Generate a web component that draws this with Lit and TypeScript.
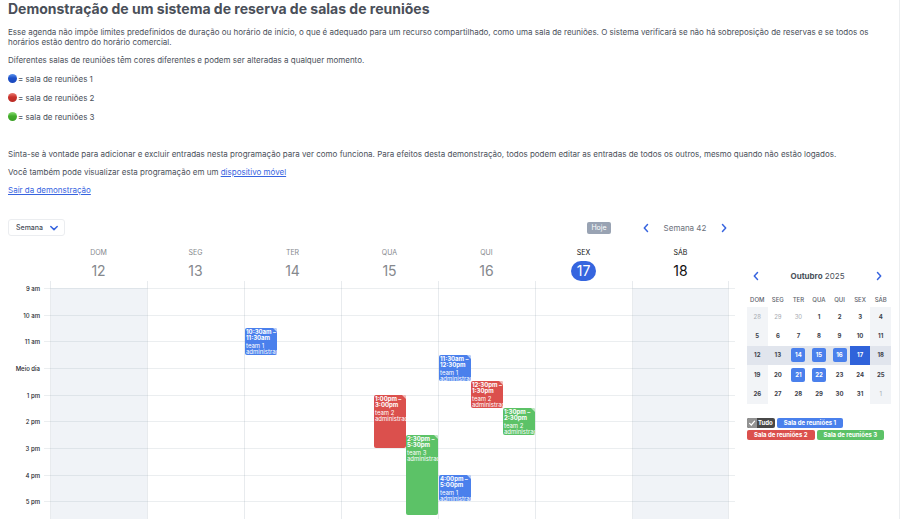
import { LitElement, html, css, svg } from "lit";
import { customElement, property } from "lit/decorators.js";
import { classMap } from "lit/directives/class-map.js";

type Room = "blue" | "red" | "green";

interface Booking {
  room: Room;
  time: string[];
  owner: string;
  start: number; // half-hour slots counted from 9 am
  length: number;
  lane: number;
}

interface Day {
  name: string;
  date: number;
  state: "past" | "today" | "future";
  off: boolean;
  bookings: Booking[];
}

const HOURS = ["9 am", "10 am", "11 am", "Meio dia", "1 pm", "2 pm", "3 pm", "4 pm", "5 pm"];

const DAYS: Day[] = [
  { name: "DOM", date: 12, state: "past", off: true, bookings: [] },
  { name: "SEG", date: 13, state: "past", off: false, bookings: [] },
  {
    name: "TER", date: 14, state: "past", off: false,
    bookings: [{ room: "blue", time: ["10:30am –", "11:30am"], owner: "team 1", start: 3, length: 2, lane: 1 }],
  },
  {
    name: "QUA", date: 15, state: "past", off: false,
    bookings: [
      { room: "red", time: ["1:00pm –", "3:00pm"], owner: "team 2", start: 8, length: 4, lane: 2 },
      { room: "green", time: ["2:30pm –", "5:30pm"], owner: "team 3", start: 11, length: 6, lane: 3 },
    ],
  },
  {
    name: "QUI", date: 16, state: "past", off: false,
    bookings: [
      { room: "blue", time: ["11:30am –", "12:30pm"], owner: "team 1", start: 5, length: 2, lane: 1 },
      { room: "red", time: ["12:30pm –", "1:30pm"], owner: "team 2", start: 7, length: 2, lane: 2 },
      { room: "green", time: ["1:30pm –", "2:30pm"], owner: "team 2", start: 9, length: 2, lane: 3 },
      { room: "blue", time: ["4:00pm –", "5:00pm"], owner: "team 1", start: 14, length: 2, lane: 1 },
    ],
  },
  { name: "SEX", date: 17, state: "today", off: false, bookings: [] },
  { name: "SÁB", date: 18, state: "future", off: true, bookings: [] },
];

const chevron = (d: string) => svg`
  <svg viewBox="0 0 12 12" width="12" height="12" aria-hidden="true">
    <path d=${d} fill="none" stroke="#3764df" stroke-width="1.5" stroke-linecap="round" stroke-linejoin="round" />
  </svg>`;
const LEFT = "M7.5 2.6 4.3 6l3.2 3.4";
const RIGHT = "M4.5 2.6 7.7 6 4.5 9.4";
const DOWN = "M2.8 4.5 6 7.6l3.2-3.1";

@customElement("week-view")
class WeekView extends LitElement {
  static styles = css`
    :host { display: block; }
    button, select { font: inherit; margin: 0; padding: 0; border: 0; background: none; cursor: pointer; }
    .toolbar { display: flex; align-items: center; justify-content: space-between; padding-right: 5px; }
    .picker { display: grid; width: 57px; height: 17px; }
    .picker select {
      grid-area: 1 / 1; appearance: none; padding: 0 7px; border: 1px solid #ebedf0; border-radius: 3px;
      background: #fff; color: #4a505a; font-size: 7px; font-weight: 500;
    }
    .picker svg { grid-area: 1 / 1; align-self: center; justify-self: end; margin-right: 5px; pointer-events: none; }
    .actions { display: flex; align-items: center; gap: 29px; }
    .today { width: 24px; height: 12px; border-radius: 2px; background: #99a3b3; color: #fff; font-size: 7px; line-height: 12px; }
    .nav { display: flex; align-items: center; justify-content: space-between; width: 90px; color: #6a707a; font-size: 8px; line-height: 12px; }
    .nav button { display: flex; }
    .heads { display: grid; grid-template-columns: repeat(7, 1fr); margin-top: 12px; padding: 0 6px 0 42px; }
    .head { display: flex; flex-direction: column; align-items: center; gap: 3px; color: #85888d; }
    .name { font-size: 7px; line-height: 10px; }
    .date { padding: 0 6px; border-radius: 10px; font-size: 14px; line-height: 20px; }
    .today-head, .future { color: #111; }
    .today-head .date { background: #3565df; color: #fff; }
    .body { display: grid; grid-template-columns: 36px 1fr; }
    .labels { display: grid; grid-template-rows: repeat(9, 1fr); height: 240px; padding-top: 7px; }
    .label { height: 8px; margin: -3px 4px 0 0; text-align: right; color: #25282d; font-size: 6px; font-weight: 500; line-height: 8px; }
    .grid { display: grid; }
    .lines, .days { grid-area: 1 / 1; display: grid; }
    .lines { grid-template-rows: repeat(9, 1fr); margin-top: 7px; z-index: 1; pointer-events: none; }
    .line { border-top: 1px solid #8090a028; }
    .days { grid-template-columns: repeat(7, 1fr); padding: 0 6px; }
    .day { display: grid; padding-top: 7px; border-left: 1px solid #e8ebee; }
    .day:last-child { border-right: 1px solid #e8ebee; }
    .slots { display: grid; grid-template: repeat(18, minmax(0, 1fr)) / repeat(3, minmax(0, 1fr)); }
    .off { background: #f0f3f7; }
    .booking {
      position: relative; z-index: 2; box-sizing: border-box; contain: size; overflow: hidden; padding: 1px 0 0 1px; border-radius: 2px;
      color: #fff; font-size: 6px; line-height: 6px; white-space: nowrap;
    }
    .booking::after { content: ""; position: absolute; top: 0; right: 0; border-style: solid; border-width: 0 4px 4px 0; border-color: transparent #ffffffa0 transparent transparent; }
    .time { display: flex; flex-direction: column; margin-bottom: 2px; font-weight: 700; }
    .who { display: flex; flex-direction: column; }
    .blue { background: #4a80ec; }
    .red { background: #db504d; }
    .green { background: #5cc267; }
  `;

  render() {
    return html`
      <div class="toolbar">
        <div class="picker">
          <select aria-label="Visualização"><option>Semana</option></select>
          ${chevron(DOWN)}
        </div>
        <div class="actions">
          <button class="today">Hoje</button>
          <div class="nav">
            <button aria-label="Semana anterior">${chevron(LEFT)}</button>
            <span>Semana 42</span>
            <button aria-label="Próxima semana">${chevron(RIGHT)}</button>
          </div>
        </div>
      </div>
      <div class="heads">
        ${DAYS.map((d) => html`
          <div class=${classMap({ head: true, "today-head": d.state === "today", future: d.state === "future" })}>
            <span class="name">${d.name}</span><span class="date">${d.date}</span>
          </div>`)}
      </div>
      <div class="body">
        <div class="labels">${HOURS.map((h) => html`<div class="label">${h}</div>`)}</div>
        <div class="grid">
          <div class="lines">${HOURS.map(() => html`<div class="line"></div>`)}</div>
          <div class="days">
            ${DAYS.map((d) => html`
              <div class="day">
                <div class=${classMap({ slots: true, off: d.off })}>
                  ${d.bookings.map((b) => html`
                    <div class="booking ${b.room}" style="grid-area: ${b.start + 1} / ${b.lane} / span ${b.length} / span 1">
                      <div class="time">${b.time.map((t) => html`<span>${t}</span>`)}</div>
                      <div class="who"><span>${b.owner}</span><span>administrador</span></div>
                    </div>`)}
                </div>
              </div>`)}
          </div>
        </div>
      </div>
    `;
  }
}

const MONTH: number[][] = [
  [28, 29, 30, 1, 2, 3, 4],
  [5, 6, 7, 8, 9, 10, 11],
  [12, 13, 14, 15, 16, 17, 18],
  [19, 20, 21, 22, 23, 24, 25],
  [26, 27, 28, 29, 30, 31, 1],
];
const BUSY = [14, 15, 16, 21, 22];

@customElement("month-view")
class MonthView extends LitElement {
  static styles = css`
    :host { display: block; }
    button { font: inherit; margin: 0; padding: 0; border: 0; background: none; color: inherit; cursor: pointer; }
    .nav { display: flex; align-items: center; justify-content: space-between; padding: 0 6px 0 3px; color: #4a505a; font-size: 8px; line-height: 12px; }
    .nav button { display: flex; }
    table { width: 100%; height: 111px; margin-top: 11px; border-collapse: collapse; table-layout: fixed; }
    th, td { padding: 0; text-align: center; }
    th { height: 14px; color: #5c626b; font-size: 6px; font-weight: 500; }
    td { height: 19px; color: #3d424b; font-size: 6px; font-weight: 700; }
    td:first-child, td:last-child { background: #f2f4f7; }
    td.outside { color: #a7abb2; font-weight: 400; }
    .current td { background: #e1e5ed; }
    .current .now { background: #3063da; color: #fff; }
    .mark { display: block; width: 14px; height: 14px; margin: 0 auto; border-radius: 2px; background: #4a80ec; color: #fff; line-height: 14px; }
    .rooms { display: flex; flex-wrap: wrap; gap: 2px; margin-top: 14px; color: #fff; font-size: 6px; font-weight: 700; line-height: 10px; }
    .chip { height: 10px; padding: 0 7px; border-radius: 2px; }
    .all { display: flex; gap: 1px; padding: 0 2px 0 0; overflow: hidden; background: #484848; }
    .tick { display: grid; width: 10px; height: 10px; background: #929292; }
    .tick input { grid-area: 1 / 1; appearance: none; width: 10px; height: 10px; margin: 0; }
    .tick svg { grid-area: 1 / 1; pointer-events: none; }
    .blue { background: #4a80ec; }
    .red { background: #db504d; }
    .green { background: #5cc267; }
  `;

  render() {
    return html`
      <div class="nav">
        <button aria-label="Mês anterior">${chevron(LEFT)}</button>
        <span><b>Outubro</b> 2025</span>
        <button aria-label="Próximo mês">${chevron(RIGHT)}</button>
      </div>
      <table>
        <thead><tr>${DAYS.map((d) => html`<th scope="col">${d.name}</th>`)}</tr></thead>
        <tbody>
          ${MONTH.map((week, w) => html`
            <tr class=${classMap({ current: w === 2 })}>
              ${week.map((n) => {
                const outside = (w === 0 && n > 7) || (w === 4 && n < 7);
                const busy = !outside && BUSY.includes(n);
                return html`<td class=${classMap({ outside, now: n === 17 })}>
                  ${busy ? html`<button class="mark">${n}</button>` : n}
                </td>`;
              })}
            </tr>`)}
        </tbody>
      </table>
      <div class="rooms">
        <label class="chip all">
          <span class="tick">
            <input type="checkbox" checked />
            <svg viewBox="0 0 10 10" width="10" height="10" aria-hidden="true">
              <path d="M2.6 5.3 4.3 7l3.3-3.8" fill="none" stroke="#fff" stroke-width="1.2" stroke-linecap="round" />
            </svg>
          </span>Tudo
        </label>
        <button class="chip blue">Sala de reuniões 1</button>
        <button class="chip red">Sala de reuniões 2</button>
        <button class="chip green">Sala de reuniões 3</button>
      </div>
    `;
  }
}

@customElement("room-dot")
class RoomDot extends LitElement {
  @property() color: Room = "blue";
  static styles = css`
    :host { display: block; width: 9px; height: 9px; border-radius: 50%; }
    :host([color="blue"]) { background: linear-gradient(#5b93ee, #1d50c8 45%, #1a48bd); }
    :host([color="red"]) { background: linear-gradient(#ea7b72, #c9322b 45%, #b92b25); }
    :host([color="green"]) { background: linear-gradient(#8add72, #43ad2b 45%, #3b9f26); }
  `;
  render() {
    return html``;
  }
}

@customElement("app-root")
class AppRoot extends LitElement {
  static styles = css`
    :host {
      display: block; box-sizing: border-box; height: 100vh; overflow: hidden; padding: 0 8px; border-right: 1px solid #eceef0;
      background: #fff; color: #4a505a; font-family: Inter, "Liberation Sans", sans-serif; font-size: 8px; line-height: 10px;
    }
    h1 { margin: 0 0 9px; font-size: 14px; line-height: 18px; font-weight: 700; color: #4a4f59; }
    p { margin: 0 0 8px; }
    a { color: #3764df; text-decoration: underline; }
    .room { display: flex; align-items: center; gap: 1px; min-height: 11px; }
    .planner { display: grid; grid-template-columns: 1fr 144px; gap: 12px; margin-top: 24px; }
    .side { margin-top: 51px; }
  `;

  render() {
    return html`
      <h1>Demonstração de um sistema de reserva de salas de reuniões</h1>
      <p>Esse agenda não impõe limites predefinidos de duração ou horário de início, o que é adequado para um recurso compartilhado, como uma sala de reuniões. O sistema verificará se não há sobreposição de reservas e se todos os horários estão dentro do horário comercial.</p>
      <p>Diferentes salas de reuniões têm cores diferentes e podem ser alteradas a qualquer momento.</p>
      <p class="room"><room-dot color="blue"></room-dot>= sala de reuniões 1</p>
      <p class="room"><room-dot color="red"></room-dot>= sala de reuniões 2</p>
      <p class="room"><room-dot color="green"></room-dot>= sala de reuniões 3</p>
      <p class="room"></p>
      <p>Sinta-se à vontade para adicionar e excluir entradas nesta programação para ver como funciona. Para efeitos desta demonstração, todos podem editar as entradas de todos os outros, mesmo quando não estão logados.</p>
      <p>Você também pode visualizar esta programação em um <a href="#movel">dispositivo móvel</a></p>
      <p><a href="#sair">Sair da demonstração</a></p>
      <div class="planner">
        <week-view></week-view>
        <month-view class="side"></month-view>
      </div>
    `;
  }
}
